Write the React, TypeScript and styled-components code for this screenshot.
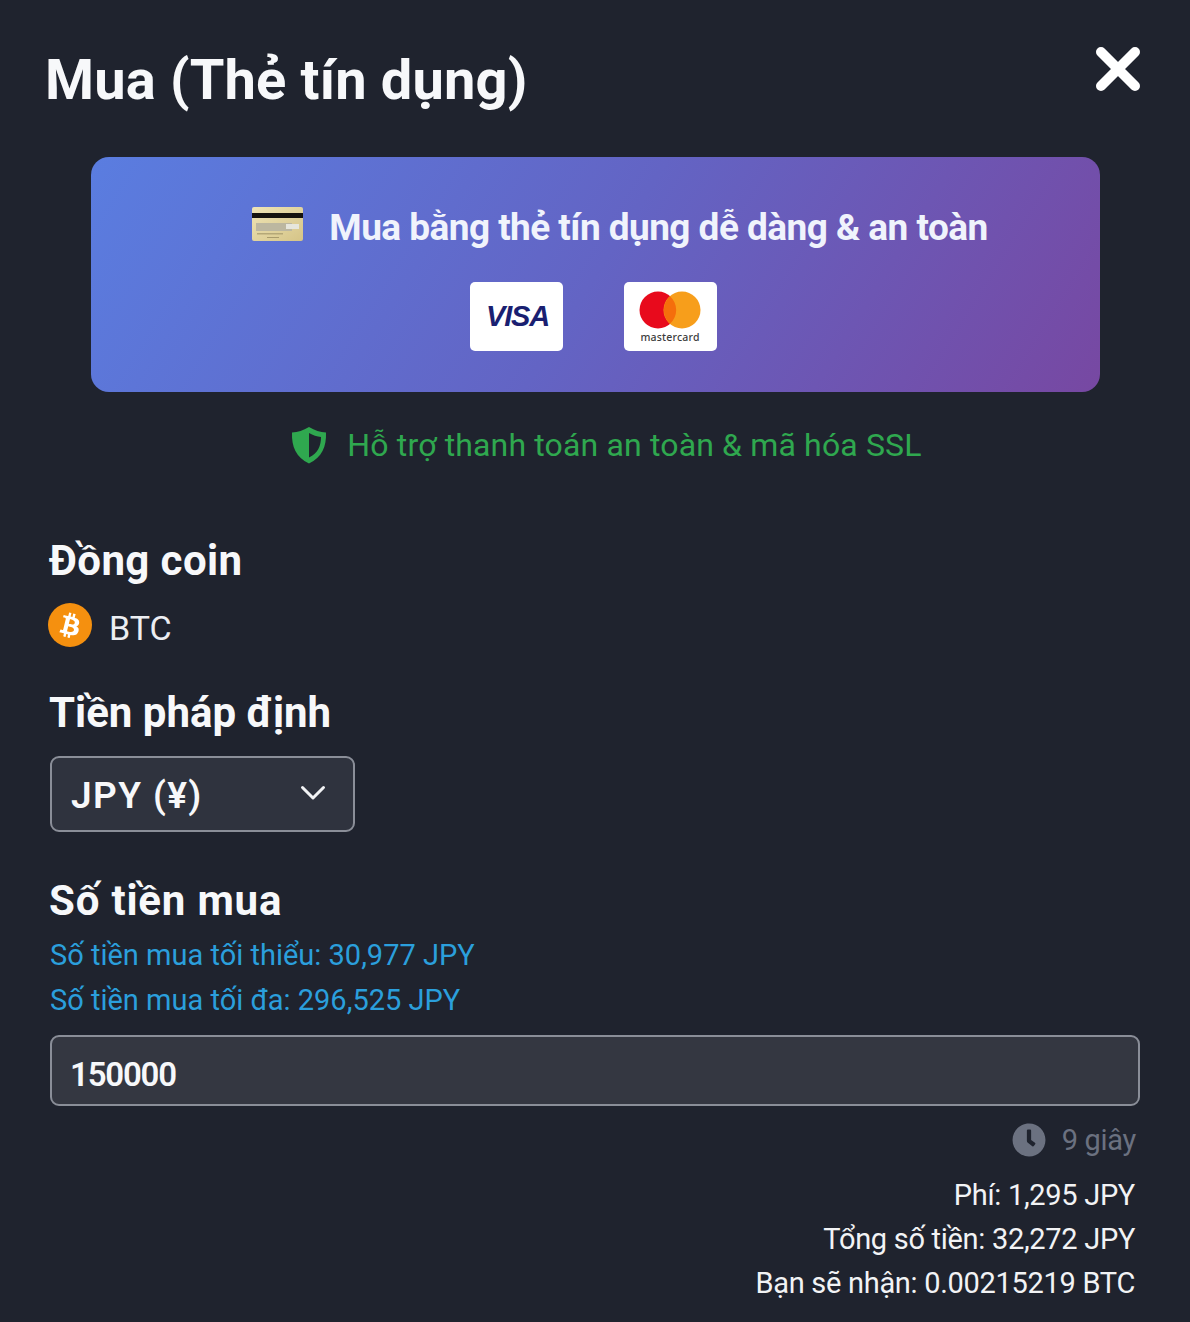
import styled, { createGlobalStyle } from "styled-components";
import { FaBtc, FaClock } from "react-icons/fa";

const GlobalStyle = createGlobalStyle`
  html, body {
    margin: 0;
    padding: 0;
    background: #1f232e;
  }
  * {
    box-sizing: border-box;
  }
`;

const Page = styled.div`
  width: 1190px;
  height: 1322px;
  overflow: hidden;
  background: #1f232e;
  color: #f7f8fa;
  font-family: Roboto, "Liberation Sans", sans-serif;
  padding: 0 50px;
`;

const TitleRow = styled.header`
  display: flex;
  justify-content: space-between;
  align-items: flex-start;
  height: 157px;
  margin: 0 0 0 -5px;
`;

const Title = styled.h1`
  margin: 42px 0 0;
  font-size: 56px;
  line-height: 76px;
  font-weight: 700;
  letter-spacing: 0.17px;
`;

const CloseButton = styled.button`
  display: flex;
  width: 48px;
  height: 48px;
  margin: 45px -2px 0 0;
  padding: 0;
  border: 0;
  background: none;
`;

const Banner = styled.section`
  width: 1009px;
  height: 235px;
  margin-left: 41px;
  padding-top: 41px;
  border-radius: 18px;
  background: linear-gradient(122deg, #5a7de0 0%, #6364c4 50%, #7748a2 100%);
  display: flex;
  flex-direction: column;
  align-items: center;
`;

const BannerHeading = styled.div`
  display: flex;
  align-items: center;
  gap: 26px;
  height: 58px;
  margin-left: 49px;
  font-size: 37px;
  font-weight: 700;
  letter-spacing: -0.55px;
  color: #f0f3fc;
`;

const CardArt = styled.svg`
  flex: none;
  margin-top: -6px;
`;

const PayCards = styled.div`
  display: flex;
  gap: 61px;
  margin: 26px 0 0 -5px;
`;

const PayCard = styled.div`
  width: 93px;
  height: 69px;
  border-radius: 5px;
  background: #ffffff;
  display: flex;
  flex-direction: column;
  align-items: center;
  justify-content: center;
`;

const VisaText = styled.span`
  margin-left: 3px;
  font-family: "Liberation Sans", sans-serif;
  font-size: 29px;
  font-weight: 700;
  font-style: italic;
  letter-spacing: -1.2px;
  color: #1a1f71;
`;

const MasterText = styled.span`
  font-family: "Noto Sans", sans-serif;
  font-size: 10.5px;
  line-height: 10px;
  font-weight: 500;
  letter-spacing: 0.2px;
  color: #3c3c3c;
  margin-top: 3px;
`;

const Secure = styled.div`
  display: flex;
  align-items: center;
  justify-content: center;
  gap: 20px;
  height: 56px;
  margin: 25px 0 0 23px;
  font-size: 32px;
  font-weight: 400;
  letter-spacing: 0.15px;
  color: #2fa84f;
`;

const SectionLabel = styled.h2<{ $top: number; $track: number }>`
  margin: ${(p) => p.$top}px 0 0 -1px;
  font-size: 42px;
  line-height: 56px;
  font-weight: 700;
  letter-spacing: ${(p) => p.$track}px;
`;

const CoinRow = styled.div`
  display: flex;
  align-items: center;
  gap: 17px;
  height: 46px;
  margin: 13px 0 0 -2px;
  font-size: 34px;
  color: #eceef2;
`;

const CoinName = styled.span`
  margin-top: 6px;
`;

const CoinBadge = styled.span`
  display: flex;
  align-items: center;
  justify-content: center;
  width: 44px;
  height: 44px;
  border-radius: 50%;
  background: #f5900f;
  color: #ffffff;
  font-size: 25px;

  svg {
    transform: rotate(14deg);
  }
`;

const Select = styled.div`
  display: flex;
  align-items: center;
  justify-content: space-between;
  width: 305px;
  height: 76px;
  margin-top: 15px;
  padding: 2px 27px 0 19px;
  border: 2px solid #8a8e98;
  border-radius: 9px;
  background: #2f333e;
  font-size: 37px;
  font-weight: 600;
  letter-spacing: 1.4px;
`;

const Chevron = styled.svg`
  margin-top: -4px;
`;

const LimitText = styled.div<{ $top: number }>`
  margin-top: ${(p) => p.$top}px;
  font-size: 29px;
  line-height: 40px;
  color: #2b9fdc;
`;

const AmountInput = styled.div`
  display: flex;
  align-items: center;
  height: 71px;
  margin-top: 15px;
  padding: 8px 0 0 18px;
  border: 2px solid #8a8e98;
  border-radius: 9px;
  background: #343741;
  font-size: 33px;
  font-weight: 600;
  letter-spacing: -1.2px;
`;

const Summary = styled.div`
  display: flex;
  flex-direction: column;
  align-items: flex-end;
  margin-right: 5px;
`;

const Timer = styled.div`
  display: flex;
  align-items: center;
  gap: 16px;
  height: 44px;
  margin: 12px -1px 0 0;
  font-size: 29px;
  letter-spacing: -0.3px;
  color: #6b7180;
`;

const SummaryLine = styled.div<{ $top?: number }>`
  margin-top: ${(p) => p.$top ?? 0}px;
  font-size: 29px;
  line-height: 44px;
  letter-spacing: -0.3px;
  color: #f2f3f5;
`;

function CloseIcon() {
  return (
    <svg width="48" height="48" viewBox="0 0 48 48" fill="none">
      <path d="M7 7 L41 41 M41 7 L7 41" stroke="#ffffff" strokeWidth="10" strokeLinecap="round" />
    </svg>
  );
}

function GoldCard() {
  return (
    <CardArt width="51" height="34" viewBox="0 0 51 34">
      <defs>
        <linearGradient id="gold" x1="0" y1="0" x2="1" y2="1">
          <stop offset="0" stopColor="#eee4b6" />
          <stop offset="1" stopColor="#d5c487" />
        </linearGradient>
      </defs>
      <rect width="51" height="34" rx="2" fill="url(#gold)" />
      <rect y="6" width="51" height="5" fill="#15130f" />
      <rect x="4" y="16" width="36" height="8" fill="#bcb7a0" />
      <rect x="34" y="17" width="13" height="5" fill="#e6e6dc" />
      <rect x="5" y="26" width="26" height="1.5" fill="#b5a878" />
      <rect x="15" y="30" width="12" height="1" fill="#a99b6c" />
    </CardArt>
  );
}

function MastercardMark() {
  return (
    <svg width="62" height="38" viewBox="0 0 62 38">
      <circle cx="19" cy="19" r="18.5" fill="#e80a1c" />
      <circle cx="43" cy="19" r="18.5" fill="#f79e1b" />
      <path d="M31 5.2 a18.5 18.5 0 0 1 0 27.6 a18.5 18.5 0 0 1 0 -27.6 z" fill="#f56e0c" />
    </svg>
  );
}

function ShieldIcon() {
  return (
    <svg width="36" height="38" viewBox="0 0 36 38">
      <path
        d="M18 1 C24 4.5 29 6 35 6.5 C35.5 21 31 31 18 37.5 C5 31 0.5 21 1 6.5 C7 6 12 4.5 18 1 Z"
        fill="#2fa84f"
      />
      <path d="M18 7 C22 9.5 26 10.5 30 11 C30 20 27 27 18 31.5 Z" fill="#1f232e" />
    </svg>
  );
}

function ChevronIcon() {
  return (
    <Chevron width="26" height="16" viewBox="0 0 26 16" fill="none">
      <path d="M2.5 2.5 L13 13 L23.5 2.5" stroke="#f2f3f5" strokeWidth="3" strokeLinecap="round" strokeLinejoin="round" />
    </Chevron>
  );
}

export default function App() {
  return (
    <Page>
      <GlobalStyle />
      <TitleRow>
        <Title>Mua (Thẻ tín dụng)</Title>
        <CloseButton aria-label="close">
          <CloseIcon />
        </CloseButton>
      </TitleRow>

      <Banner>
        <BannerHeading>
          <GoldCard />
          Mua bằng thẻ tín dụng dễ dàng &amp; an toàn
        </BannerHeading>
        <PayCards>
          <PayCard>
            <VisaText>VISA</VisaText>
          </PayCard>
          <PayCard>
            <MastercardMark />
            <MasterText>mastercard</MasterText>
          </PayCard>
        </PayCards>
      </Banner>

      <Secure>
        <ShieldIcon />
        Hỗ trợ thanh toán an toàn &amp; mã hóa SSL
      </Secure>

      <SectionLabel $top={60} $track={0.4}>Đồng coin</SectionLabel>
      <CoinRow>
        <CoinBadge>
          <FaBtc />
        </CoinBadge>
        <CoinName>BTC</CoinName>
      </CoinRow>

      <SectionLabel $top={37} $track={0}>Tiền pháp định</SectionLabel>
      <Select>
        JPY (¥)
        <ChevronIcon />
      </Select>

      <SectionLabel $top={41} $track={0.8}>Số tiền mua</SectionLabel>
      <LimitText $top={6}>Số tiền mua tối thiểu: 30,977 JPY</LimitText>
      <LimitText $top={5}>Số tiền mua tối đa: 296,525 JPY</LimitText>
      <AmountInput>150000</AmountInput>

      <Summary>
        <Timer>
          <FaClock size={34} />
          9 giây
        </Timer>
        <SummaryLine $top={11}>Phí: 1,295 JPY</SummaryLine>
        <SummaryLine>Tổng số tiền: 32,272 JPY</SummaryLine>
        <SummaryLine>Bạn sẽ nhận: 0.00215219 BTC</SummaryLine>
      </Summary>
    </Page>
  );
}
